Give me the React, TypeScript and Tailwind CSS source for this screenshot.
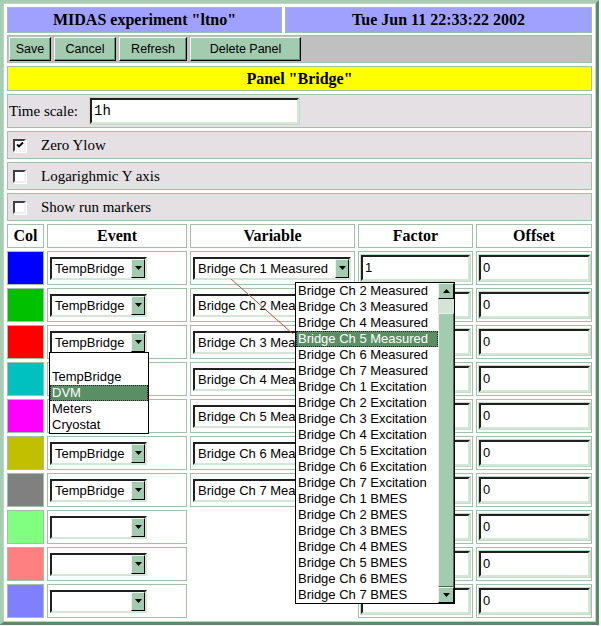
import React from 'react';

const cell = 'border border-[#a0c0a8]';
const sans = "font-['Liberation_Sans',Arial,sans-serif]";

// rows 2-7 have their variable select partly covered by the open list,
// rows 4-5 have their event select fully covered by the open event list
const rows = [
  { color: 'bg-[#0000ff]', event: 'TempBridge', variable: 'Bridge Ch 1 Measured', factor: '1' },
  { color: 'bg-[#00c000]', event: 'TempBridge', variable: 'Bridge Ch 2 Mea', factor: '' },
  { color: 'bg-[#ff0000]', event: 'TempBridge', variable: 'Bridge Ch 3 Mea', factor: '' },
  { color: 'bg-[#00c0c0]', event: '', variable: 'Bridge Ch 4 Mea', factor: '' },
  { color: 'bg-[#ff00ff]', event: '', variable: 'Bridge Ch 5 Mea', factor: '' },
  { color: 'bg-[#c0c000]', event: 'TempBridge', variable: 'Bridge Ch 6 Mea', factor: '' },
  { color: 'bg-[#808080]', event: 'TempBridge', variable: 'Bridge Ch 7 Mea', factor: '' },
  { color: 'bg-[#80ff80]', event: '', variable: null, factor: '' },
  { color: 'bg-[#ff8080]', event: '', variable: null, factor: '' },
  { color: 'bg-[#8080ff]', event: '', variable: null, factor: '' },
];

const variableOptions = [
  ...[2, 3, 4, 5, 6, 7].map((n) => `Bridge Ch ${n} Measured`),
  ...[1, 2, 3, 4, 5, 6, 7].map((n) => `Bridge Ch ${n} Excitation`),
  ...[1, 2, 3, 4, 5, 6, 7].map((n) => `Bridge Ch ${n} BMES`),
];

const Btn: React.FC<{ label: string; w: string }> = ({ label, w }) => (
  <div
    className={`${w} h-[24px] flex items-center justify-center bg-[#a3cbb0] border border-t-[#f0f8f2] border-l-[#f0f8f2] border-r-black border-b-black shadow-[inset_-1px_-1px_0_#6a8a74] text-[12.5px] text-black ${sans}`}
  >
    {label}
  </div>
);

const Arrow: React.FC<{ up?: boolean }> = ({ up }) => (
  <svg width="7" height="4" viewBox="0 0 7 4">
    <path d={up ? 'M0 4h7L3.5 0z' : 'M0 0h7L3.5 4z'} fill="#000" />
  </svg>
);

const ArrowBtn: React.FC<{ up?: boolean; cls: string }> = ({ up, cls }) => (
  <div
    className={`${cls} bg-[#a3cbb0] border border-t-[#e8f4ec] border-l-[#e8f4ec] border-r-black border-b-black flex items-center justify-center`}
  >
    <Arrow up={up} />
  </div>
);

const Select: React.FC<{ w: string; value: string }> = ({ w, value }) => (
  <div
    className={`${w} h-[23px] relative flex items-center bg-white border-2 border-t-[#202020] border-l-[#202020] border-b-[#d4e6d8] border-r-[#d4e6d8] pl-[3px] text-[13px] leading-none whitespace-nowrap overflow-hidden ${sans}`}
  >
    {value}
    <ArrowBtn cls="absolute right-0 top-0 w-[14px] h-[19px]" />
  </div>
);

const Field: React.FC<{ w: string; value: string; mono?: boolean }> = ({ w, value, mono }) => (
  <div
    className={`${w} h-[26px] flex items-center bg-white border-2 border-t-[#202020] border-l-[#202020] border-b-[#d4e6d8] border-r-[#d4e6d8] shadow-[0_0_0_1px_#c4dcc8] pl-[2px] ${
      mono ? "font-['Liberation_Mono',monospace] text-[14px]" : `${sans} text-[13px]`
    }`}
  >
    {value}
  </div>
);

const CheckBox: React.FC<{ checked?: boolean }> = ({ checked }) => (
  <div className="w-[13px] h-[13px] bg-white border-2 border-t-[#404040] border-l-[#404040] border-b-[#f0f0f0] border-r-[#f0f0f0] shadow-[1px_1px_0_#ffffff] flex items-center justify-center">
    {checked && (
      <svg width="8" height="8" viewBox="0 0 8 8">
        <path d="M1 3.5 L3 5.5 L7 1.5" stroke="#000" strokeWidth="1.8" fill="none" />
      </svg>
    )}
  </div>
);

const App: React.FC = () => {
  return (
    <div className="relative w-[601px] h-[626px] bg-white text-black font-['Liberation_Serif','Times_New_Roman',serif]">
      <div className="w-[599px] border-[3px] border-t-[#a9cdb2] border-l-[#a9cdb2] border-r-[#5b8b69] border-b-[#5b8b69]">
        <div className="flex flex-col gap-[3px] border border-[#bcd8c2] bg-white p-[3px]">
          {/* Title */}
          <div className="grid grid-cols-[275px_307px] gap-[3px] h-[25px]">
            <div className={`${cell} bg-[#a0a0ff] flex items-center justify-center font-bold text-[16px]`}>
              MIDAS experiment "ltno"
            </div>
            <div className={`${cell} bg-[#a0a0ff] flex items-center justify-center font-bold text-[16px]`}>
              Tue Jun 11 22:33:22 2002
            </div>
          </div>

          {/* Buttons */}
          <div className={`${cell} h-[28px] bg-[#c0c0c0] flex items-center gap-[3px] pl-px`}>
            <Btn label="Save" w="w-[42px]" />
            <Btn label="Cancel" w="w-[62px]" />
            <Btn label="Refresh" w="w-[68px]" />
            <Btn label="Delete Panel" w="w-[111px]" />
          </div>

          {/* Panel */}
          <div className={`${cell} h-[25px] bg-[#ffff00] flex items-center justify-center font-bold text-[16px]`}>
            Panel "Bridge"
          </div>

          {/* Time scale */}
          <div className={`${cell} h-[34px] bg-[#e4e0e4] flex items-center pl-px text-[15px]`}>
            <span className="w-[81px] shrink-0">Time scale:</span>
            <Field w="w-[209px]" value="1h" mono />
          </div>

          {[
            { label: 'Zero Ylow', checked: true },
            { label: 'Logarighmic Y axis', checked: false },
            { label: 'Show run markers', checked: false },
          ].map((o) => (
            <div key={o.label} className={`${cell} h-[28px] bg-[#e4e0e4] flex items-center pl-[5px] gap-[15px] text-[15px]`}>
              <CheckBox checked={o.checked} />
              <span>{o.label}</span>
            </div>
          ))}

          {/* Variables table */}
          <div className="grid grid-cols-[37px_140px_165px_115px_116px] grid-rows-[24px_repeat(10,34px)] gap-[3px]">
            {['Col', 'Event', 'Variable', 'Factor', 'Offset'].map((h) => (
              <div key={h} className={`${cell} flex items-center justify-center font-bold text-[16px]`}>
                {h}
              </div>
            ))}
            {rows.map((r, i) => (
              <React.Fragment key={i}>
                <div className={`${cell} ${r.color}`} />
                <div className={`${cell} flex items-center pl-[2px]`}>
                  <Select w="w-[97px]" value={r.event} />
                </div>
                {r.variable ? (
                  <div className={`${cell} flex items-center pl-[2px]`}>
                    <Select w="w-[158px]" value={r.variable} />
                  </div>
                ) : (
                  <div />
                )}
                <div className={`${cell} flex items-center pl-[2px]`}>
                  <Field w="w-[109px]" value={r.factor} />
                </div>
                <div className={`${cell} flex items-center pl-[2px]`}>
                  <Field w="w-[111px]" value="0" />
                </div>
              </React.Fragment>
            ))}
          </div>
        </div>
      </div>

      {/* stray drag line */}
      <svg className="absolute left-0 top-0 pointer-events-none" width="601" height="626">
        <line x1="231" y1="279" x2="293" y2="334" stroke="#c4562e" strokeWidth="1" />
      </svg>

      {/* Event dropdown */}
      <div className={`absolute left-[49px] top-[352px] w-[100px] border border-black bg-white text-[13px] leading-[16px] ${sans}`}>
        {['', 'TempBridge', 'DVM', 'Meters', 'Cryostat'].map((o, i) => (
          <div
            key={i}
            className={
              o === 'DVM'
                ? 'h-[16px] pl-[2px] bg-[#5a8e64] text-white outline-1 outline-dotted outline-[#202020] -outline-offset-1'
                : 'h-[16px] pl-[2px]'
            }
          >
            {o}
          </div>
        ))}
      </div>

      {/* Variable dropdown */}
      <div className={`absolute left-[295px] top-[282px] w-[160px] h-[322px] border border-black bg-white flex text-[13px] leading-[16px] ${sans}`}>
        <div className="flex-1">
          {variableOptions.map((o) => (
            <div
              key={o}
              className={
                o === 'Bridge Ch 5 Measured'
                  ? 'h-[16px] pl-[2px] whitespace-nowrap bg-[#5a8e64] text-white outline-1 outline-dotted outline-[#202020] -outline-offset-1'
                  : 'h-[16px] pl-[2px] whitespace-nowrap'
              }
            >
              {o}
            </div>
          ))}
        </div>
        <div className="w-[16px] flex flex-col bg-[#d4e4d8]">
          <ArrowBtn up cls="h-[16px]" />
          <div className="h-[14px]" />
          <div className="flex-1 bg-[#a3cbb0] border border-t-[#e8f4ec] border-l-[#e8f4ec] border-r-[#4a6a54] border-b-[#4a6a54]" />
          <ArrowBtn cls="h-[16px]" />
        </div>
      </div>
    </div>
  );
};

export default App;
